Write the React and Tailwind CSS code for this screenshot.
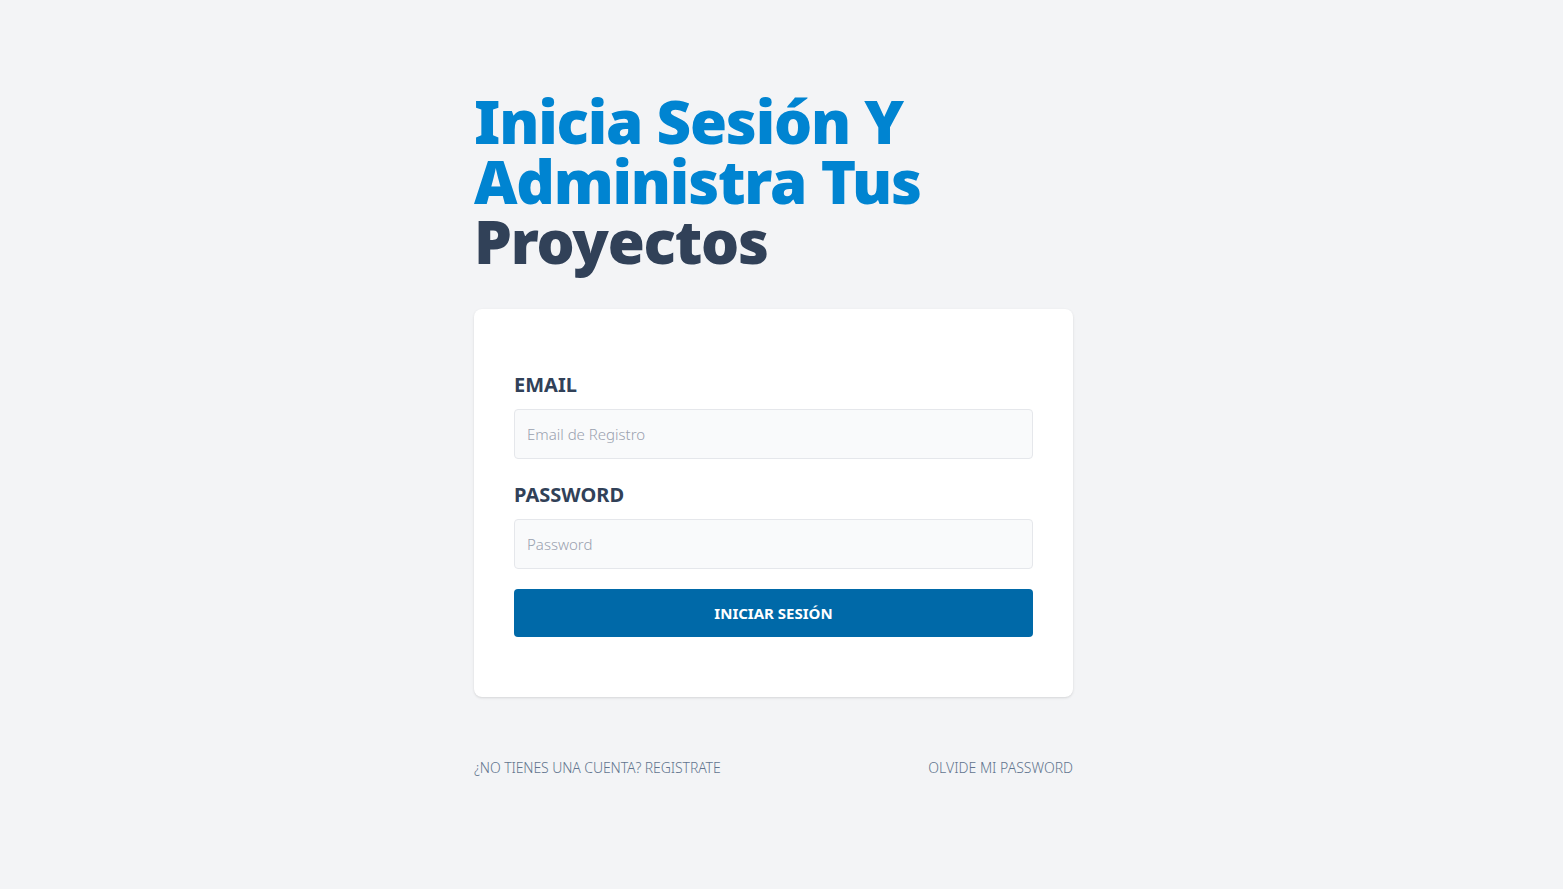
export default function App() {
  return (
    <div
      className="min-h-screen bg-gray-100 pr-[16px] flex justify-center"
      style={{ fontFamily: '"Noto Sans", "Open Sans", sans-serif' }}
    >
      <main className="w-[599px] pt-[91px]">
        {/* Title */}
        <h1 className="text-6xl leading-[60px] font-black tracking-[-1.2px] text-sky-600 capitalize">
          Inicia sesión y administra tus{" "}
          <span className="text-slate-700">proyectos</span>
        </h1>

        {/* Form card */}
        <form className="mt-[38px] bg-white rounded-lg shadow px-10 pt-10 pb-[60px]">
          <div className="my-5">
            <label
              htmlFor="email"
              className="uppercase text-slate-700 block text-xl leading-7 font-bold pt-[2px]"
            >
              Email
            </label>
            <input
              id="email"
              type="email"
              placeholder="Email de Registro"
              className="w-full mt-[10px] px-3 py-3 border border-gray-200 rounded bg-gray-50 text-[15px] leading-6 font-light placeholder:text-gray-400 outline-none"
            />
          </div>

          <div className="my-5">
            <label
              htmlFor="password"
              className="uppercase text-slate-700 block text-xl leading-7 font-bold pt-[2px]"
            >
              Password
            </label>
            <input
              id="password"
              type="password"
              placeholder="Password"
              className="w-full mt-[10px] px-3 py-3 border border-gray-200 rounded bg-gray-50 text-[15px] leading-6 font-light placeholder:text-gray-400 outline-none"
            />
          </div>

          <button
            type="button"
            className="w-full bg-sky-700 text-white uppercase font-bold text-[15px] leading-6 py-3 rounded"
          >
            Iniciar Sesión
          </button>
        </form>

        {/* Links */}
        <nav className="mt-[61px] flex justify-between">
          <a href="#" className="block text-sm leading-5 font-light uppercase text-slate-500 tracking-[-0.1px]">
            ¿No tienes una cuenta? Registrate
          </a>
          <a href="#" className="block text-sm leading-5 font-light uppercase text-slate-500">
            Olvide mi password
          </a>
        </nav>
      </main>
    </div>
  );
}
